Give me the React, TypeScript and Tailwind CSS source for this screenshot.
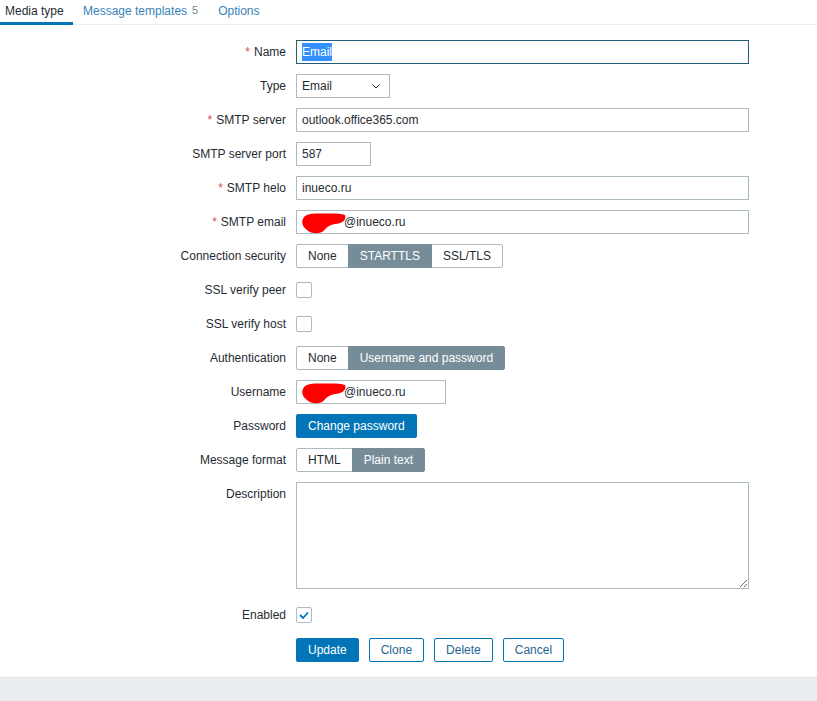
import React from "react"

const font = { fontFamily: '"Liberation Sans", Arial, sans-serif' }

function Label({ text, required }: { text: string; required?: boolean }) {
  return (
    <div className="flex h-[24px] items-center justify-end text-[12px] text-[#1f2c33]">
      {required && <span className="mr-[4px] text-[#d64e4e]">*</span>}
      {text}
    </div>
  )
}

function TextBox({ value, width }: { value: string; width: string }) {
  return (
    <div className={`flex h-[24px] items-center border border-[#acbbc2] bg-white px-[5px] text-[12px] text-[#1f2c33] ${width}`}>
      {value}
    </div>
  )
}

function Redacted({ value, width }: { value: string; width: string }) {
  return (
    <div className={`relative flex h-[24px] items-center border border-[#acbbc2] bg-white pl-[47px] text-[12px] text-[#1f2c33] ${width}`}>
      <svg className="absolute left-[3px] top-[1px]" width="46" height="22" viewBox="0 0 46 22">
        <path
          d="M3 7 C4 2 12 1 21 1.5 C31 1.5 40 1 45 3 C46.5 8 43 11 35 12 C29 13 26 16 23 19.5 C19 22 11 22 7 18 C3 15 1 11 3 7 Z"
          fill="#ff0000"
        />
      </svg>
      {value}
    </div>
  )
}

function Segmented({ items, active }: { items: string[]; active: number }) {
  return (
    <div className="flex h-[24px]">
      {items.map((it, i) => (
        <div
          key={it}
          className={
            "relative flex items-center border px-[11px] text-[12px] " +
            (i === 0 ? "rounded-l-[2px] " : "-ml-px ") +
            (i === items.length - 1 ? "rounded-r-[2px] " : "") +
            (i === active
              ? "z-10 border-[#768d99] bg-[#768d99] text-white"
              : "border-[#acbbc2] bg-white text-[#1f2c33]")
          }
        >
          {it}
        </div>
      ))}
    </div>
  )
}

function Checkbox({ checked }: { checked?: boolean }) {
  return (
    <div className="flex h-[24px] items-center">
      <div className="flex h-[16px] w-[16px] items-center justify-center rounded-[2px] border border-[#acbbc2] bg-white">
        {checked && (
          <svg width="10" height="8" viewBox="0 0 10 8">
            <path d="M1 4 L4 7 L9 1.5" fill="none" stroke="#0275b8" strokeWidth="1.8" />
          </svg>
        )}
      </div>
    </div>
  )
}

export default function App() {
  return (
    <div className="flex h-[701px] w-[817px] flex-col bg-white" style={font}>
      <div className="flex h-[25px] border-b border-[#ebeef0] text-[12px]">
        <div className="-mb-px flex w-[73px] items-start border-b-[3px] border-[#0275b8] pl-[5px] pt-[2px] text-[#1f2c33]">
          Media type
        </div>
        <div className="flex items-start px-[10px] pt-[2px] text-[#3a84b8]">
          Message templates <span className="ml-[5px] text-[11px] text-[#768d99]">5</span>
        </div>
        <div className="flex items-start px-[10px] pt-[2px] text-[#3a84b8]">Options</div>
      </div>

      <div className="grid grid-cols-[286px_auto] gap-x-[10px] gap-y-[10px] pt-[15px]">
        <Label text="Name" required />
        <div className="flex h-[24px] w-[453px] items-center border border-[#235d78] bg-white px-[5px] text-[12px]">
          <span className="bg-[#3390ff] text-white">Email</span>
        </div>

        <Label text="Type" />
        <div className="flex h-[24px] w-[94px] items-center justify-between border border-[#acbbc2] bg-white pl-[5px] pr-[9px] text-[12px] text-[#1f2c33]">
          Email
          <svg width="8" height="5" viewBox="0 0 8 5">
            <path d="M0.5 0.5 L4 4 L7.5 0.5" fill="none" stroke="#1f2c33" strokeWidth="1" />
          </svg>
        </div>

        <Label text="SMTP server" required />
        <TextBox value="outlook.office365.com" width="w-[453px]" />

        <Label text="SMTP server port" />
        <TextBox value="587" width="w-[75px]" />

        <Label text="SMTP helo" required />
        <TextBox value="inueco.ru" width="w-[453px]" />

        <Label text="SMTP email" required />
        <Redacted value="@inueco.ru" width="w-[453px]" />

        <Label text="Connection security" />
        <Segmented items={["None", "STARTTLS", "SSL/TLS"]} active={1} />

        <Label text="SSL verify peer" />
        <Checkbox />

        <Label text="SSL verify host" />
        <Checkbox />

        <Label text="Authentication" />
        <Segmented items={["None", "Username and password"]} active={1} />

        <Label text="Username" />
        <Redacted value="@inueco.ru" width="w-[150px]" />

        <Label text="Password" />
        <div className="flex">
          <button className="h-[24px] rounded-[2px] bg-[#0275b8] px-[12px] text-[12px] text-white">Change password</button>
        </div>

        <Label text="Message format" />
        <Segmented items={["HTML", "Plain text"]} active={1} />

        <Label text="Description" />
        <textarea className="block h-[107px] w-[453px] resize border border-[#acbbc2] bg-white px-[5px] text-[12px] text-[#1f2c33] outline-none" />

        <div className="mt-[4px]">
          <Label text="Enabled" />
        </div>
        <div className="mt-[4px]">
          <Checkbox checked />
        </div>

        <div />
        <div className="mt-[1px] flex gap-[10px]">
          <button className="h-[24px] rounded-[2px] border border-[#0275b8] bg-[#0275b8] px-[11px] text-[12px] text-white">Update</button>
          <button className="h-[24px] rounded-[2px] border border-[#0275b8] bg-white px-[11px] text-[12px] text-[#1f6593]">Clone</button>
          <button className="h-[24px] rounded-[2px] border border-[#0275b8] bg-white px-[11px] text-[12px] text-[#1f6593]">Delete</button>
          <button className="h-[24px] rounded-[2px] border border-[#0275b8] bg-white px-[11px] text-[12px] text-[#1f6593]">Cancel</button>
        </div>
      </div>

      <div className="mt-[15px] flex-1 border-t border-[#dfe4e7] bg-[#ebeef0]" />
    </div>
  )
}
